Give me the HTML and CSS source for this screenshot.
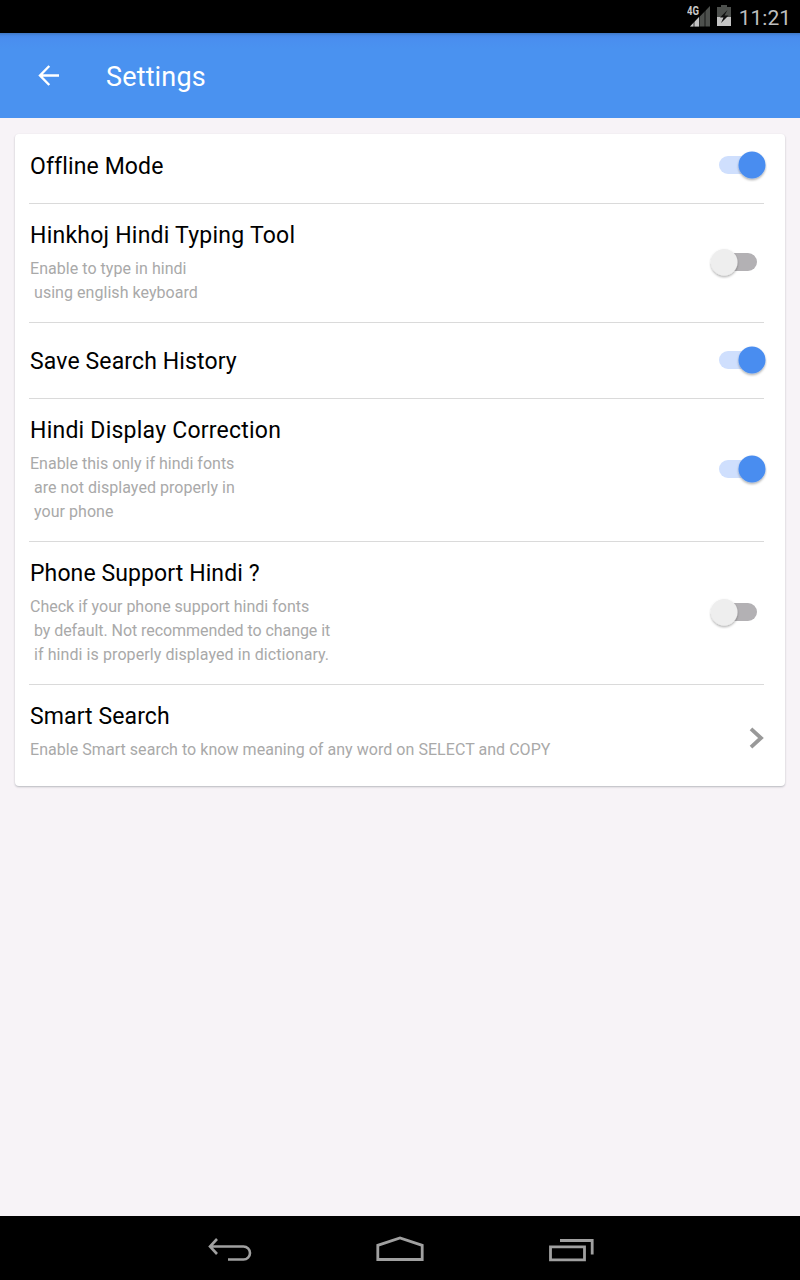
FILE: index.html
```html
<!DOCTYPE html>
<html lang="en">
<head>
<meta charset="utf-8">
<title>Settings</title>
<link rel="stylesheet" href="styles.css">
</head>
<body>
<svg width="0" height="0" class="defs" aria-hidden="true">
  <defs>
    <filter id="thumb-shadow" x="-20%" y="-20%" width="140%" height="150%">
      <feDropShadow dx="0" dy="1.5" stdDeviation="0.8" flood-color="#000" flood-opacity=".32"/>
    </filter>
    <symbol id="switch-on" viewBox="0 0 58 34">
      <rect x="10" y="8" width="38" height="18" rx="9" fill="#cfdffd"/>
      <circle cx="43" cy="17" r="13.5" fill="#4a8df0" filter="url(#thumb-shadow)"/>
    </symbol>
    <symbol id="switch-off" viewBox="0 0 58 34">
      <rect x="10" y="8" width="38" height="18" rx="9" fill="#b3b1b4"/>
      <circle cx="15.2" cy="17.2" r="13.3" fill="#eeeeee" filter="url(#thumb-shadow)"/>
    </symbol>
  </defs>
</svg>
<div class="screen">
  <div class="status-bar">
    <svg class="signal" width="24" height="24" viewBox="0 0 24 24">
      <path d="M3 22.500 23 2V22.500Z" fill="#4d504d"/>
      <path d="M3 22.500 12.500 12.500V22.500Z" fill="#c4c4c4"/>
      <path d="M7 15V23M12.500 10V23M18 5V23" stroke="#000" stroke-width=".7"/>
      <text class="network" x="0" y="11" textLength="12" lengthAdjust="spacingAndGlyphs">4G</text>
    </svg>
    <svg class="battery" width="14" height="22" viewBox="0 0 14 22">
      <path d="M4 0H10V2H14V21H0V2H4Z" fill="#4d504d"/>
      <path d="M0 12H14V21H0Z" fill="#c4c4c4"/>
      <path d="M10.500 5 3 12.500H6.500L4 18 11.500 10.500H7.500Z" fill="#111"/>
    </svg>
    <span class="clock">11:21</span>
  </div>
  <header class="toolbar">
    <svg class="back" width="24" height="24" viewBox="0 0 24 24">
      <path d="M23 11.500H4M13.300 2 4 11.500 13.300 21" fill="none" stroke="#fff" stroke-width="2.400"/>
    </svg>
    <h1 class="heading">Settings</h1>
  </header>
  <main class="content">
    <div class="card">
      <section class="row row-first">
        <h2 class="title">Offline Mode</h2>
        <svg class="switch" width="58" height="34"><use href="#switch-on"/></svg>
      </section>
      <section class="row row-two">
        <div>
          <h2 class="title spaced">Hinkhoj Hindi Typing Tool</h2>
          <p class="desc"><span class="wide">Enable to type in hindi
 using english keyboard</span></p>
        </div>
        <svg class="switch" width="58" height="34"><use href="#switch-off"/></svg>
      </section>
      <section class="row row-plain">
        <h2 class="title">Save Search History</h2>
        <svg class="switch" width="58" height="34"><use href="#switch-on"/></svg>
      </section>
      <section class="row row-three">
        <div>
          <h2 class="title spaced">Hindi Display Correction</h2>
          <p class="desc">Enable this only if hindi fonts
<span class="wide"> are not displayed properly in
 your phone</span></p>
        </div>
        <svg class="switch" width="58" height="34"><use href="#switch-on"/></svg>
      </section>
      <section class="row row-three">
        <div>
          <h2 class="title snug">Phone Support Hindi ?</h2>
          <p class="desc">Check if your phone support hindi fonts
<span class="narrow"> by default. Not recommended to change it</span>
<span class="wider"> if hindi is properly displayed in dictionary.</span></p>
        </div>
        <svg class="switch" width="58" height="34"><use href="#switch-off"/></svg>
      </section>
      <section class="row row-last">
        <div>
          <h2 class="title snug">Smart Search</h2>
          <p class="desc"><span class="wide">Enable Smart search to know meaning of any word on SELECT and COPY</span></p>
        </div>
        <svg class="chevron" width="16" height="24" viewBox="0 0 16 24">
          <path d="M3 2.800 13 12 3 21.200" fill="none" stroke="#999" stroke-width="3.800"/>
        </svg>
      </section>
    </div>
  </main>
  <nav class="nav-bar">
    <svg width="48" height="28" viewBox="0 0 48 28">
      <path d="M12 3 5 10.500 12 18M5.500 10.500H38.500A6.300 6.300 0 0 1 38.500 23.500H23" fill="none" stroke="#a0a0a0" stroke-width="2.600"/>
    </svg>
    <svg width="48" height="28" viewBox="0 0 48 28">
      <path d="M1.800 23.500V9.300L24 2 46.200 9.300V23.500Z" fill="none" stroke="#a0a0a0" stroke-width="2.800"/>
    </svg>
    <svg width="48" height="28" viewBox="0 0 48 28">
      <path d="M3.500 10.800H37.500V23.800H3.500ZM13 4.500H45.200V18.500" fill="none" stroke="#a0a0a0" stroke-width="2.800"/>
    </svg>
  </nav>
</div>
</body>
</html>
```
FILE: styles.css
```css
* {
  box-sizing: border-box;
}

body {
  margin: 0;
  font-family: Roboto, "Noto Sans", sans-serif;
  background: #f7f3f7;
}

svg {
  display: block;
  flex: none;
}

.defs {
  position: absolute;
}

.screen {
  display: flex;
  flex-direction: column;
  width: 800px;
  height: 1280px;
}

.status-bar {
  display: flex;
  justify-content: flex-end;
  height: 33px;
  padding: 4px 9px 0 0;
  background: #000;
}

.network {
  font-size: 12px;
  font-weight: 700;
  fill: #c8c8c8;
  stroke: #000;
  stroke-width: 1.500px;
  paint-order: stroke;
}

.battery {
  margin: 1px 8px 0 6px;
}

.clock {
  font-size: 21px;
  line-height: 28px;
  color: #bebebe;
}

.toolbar {
  display: flex;
  align-items: center;
  gap: 46px;
  height: 85px;
  padding: 1px 36px 0;
  background: linear-gradient(#4078c4 0, #478aeb 3px, #4a8eef 6px, #4a92f0 16px);
}

.heading {
  margin: 2px 0 0;
  font-size: 27px;
  font-weight: 400;
  line-height: 36px;
  letter-spacing: .150px;
  color: #fff;
}

.content {
  flex: 1;
  padding: 16px 15px;
}

.card {
  padding: 0 21px 0 14px;
  background: #fff;
  border-radius: 4px;
  box-shadow: 0 1px 2px rgba(40, 50, 60, .3);
}

.row {
  display: flex;
  justify-content: space-between;
  align-items: center;
  padding-left: 1px;
  border-bottom: 1px solid #dadada;
}

.row-first {
  height: 70px;
  padding-bottom: 6px;
}

.row-two {
  height: 119px;
}

.row-plain {
  height: 76px;
}

.row-three {
  height: 143px;
}

.row-last {
  height: 101px;
  padding-bottom: 8px;
  border-bottom: 0;
}

.switch {
  margin: 0 -3px 2px 0;
}

.title {
  margin: 2px 0 0;
  font-size: 23px;
  font-weight: 400;
  line-height: 36px;
  letter-spacing: .130px;
  color: #000;
}

.title.spaced {
  letter-spacing: .230px;
}

.title.snug {
  letter-spacing: .100px;
}

div > .title {
  margin: 0 0 6px;
  line-height: 30px;
}

.desc {
  margin: 0;
  font-size: 16px;
  line-height: 24px;
  color: #a9a9a9;
  white-space: pre;
}

.wide {
  letter-spacing: .045px;
}

.wider {
  letter-spacing: .080px;
}

.narrow {
  letter-spacing: -.060px;
}

.chevron {
  margin-top: 13px;
}

.nav-bar {
  display: flex;
  justify-content: center;
  gap: 123px;
  height: 64px;
  padding-top: 20px;
  background: #000;
}
```
